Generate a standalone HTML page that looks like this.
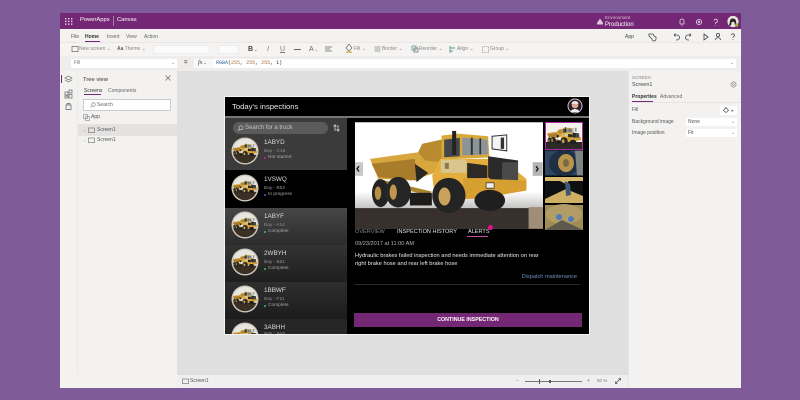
<!DOCTYPE html>
<html><head><meta charset="utf-8"><style>
html,body{margin:0;padding:0}
body{width:800px;height:400px;overflow:hidden;background:#7f5b9a;position:relative;font-family:"Liberation Sans",sans-serif;font-size:5px;color:#444}
div,span,svg.a{position:absolute}
#p{left:0;top:0;width:800px;height:400px;filter:blur(.3px)}
.t{white-space:nowrap;line-height:1}
.w{color:#fff}
.row{left:225px;width:122px;height:37px}
.n{left:264px;font-size:6.300px;color:#ddd;white-space:nowrap;line-height:1}
.b{left:264px;font-size:4.800px;color:#8f8f8f;white-space:nowrap;line-height:1}
.s{left:268px;font-size:4.800px;color:#a5a5a5;white-space:nowrap;line-height:1}
.d{left:264px;width:2px;height:2px;border-radius:50%}
</style></head><body><div id="p">
<svg width="0" height="0" style="position:absolute"><defs>
<g id="truck">
<path d="M75 130L220 110L232 85L290 72V150L262 175L200 195L100 190Z" fill="#d7a63c"/>
<path d="M220 110L232 85L290 72V140L240 135Z" fill="#b98a30"/>
<path d="M80 145L210 130L215 195L100 185Z" fill="#a97c2b"/>
<path d="M210 145L250 172L215 200Z" fill="#2a2620"/>
<path d="M290 60L340 54L430 62L434 126L290 132Z" fill="#d9a83a"/>
<path d="M298 72L345 67V122L298 125Z" fill="#44474a"/>
<path d="M352 66L428 72L430 116L352 120Z" fill="#8b9599"/>
<path d="M378 66h6v52h-6ZM404 68h5v48h-5Z" fill="#333"/>
<path d="M322 46h12v72h-12Z" fill="#222"/>
<path d="M442 62L486 58V106L442 100Z" fill="#f4f4f4" stroke="#333" stroke-width="3"/>
<path d="M468 66h10v34h-10Z" fill="#333"/>
<path d="M285 130H470L545 190V225L400 250L270 250L262 180Z" fill="#e3ae3d"/>
<path d="M288 132H365V172H288Z" fill="#d9c68f"/>
<path d="M300 142h12v18h-12Z" fill="#8a7a4a"/>
<path d="M367 142L428 150V188H367Z" fill="#2d2a26"/>
<path d="M430 122L520 135V215L470 220L430 185Z" fill="#2a2a2a"/>
<path d="M472 140H520V215H472Z" fill="#4a4a48"/>
<path d="M355 188L545 195V225L400 250H355Z" fill="#d69f30"/>
<rect x="424" y="202" width="24" height="16" fill="#eee" stroke="#222" stroke-width="2"/>
<path d="M100 190L260 228L250 240L90 200Z" fill="#a9842f"/>
<ellipse cx="435" cy="255" rx="46" ry="32" fill="#1f1f1f"/>
<rect x="195" y="232" width="66" height="38" fill="#1d1c1b"/>
<ellipse cx="107" cy="233" rx="26" ry="42" fill="#232323"/>
<ellipse cx="99" cy="233" rx="10" ry="20" fill="#b88e45"/>
<ellipse cx="160" cy="230" rx="38" ry="46" fill="#262626"/>
<ellipse cx="145" cy="230" rx="11" ry="23" fill="#c09650"/>
<ellipse cx="312" cy="240" rx="50" ry="53" fill="#242424"/>
<ellipse cx="299" cy="243" rx="18" ry="27" fill="#c9a25b"/>
</g>
<symbol id="av" viewBox="0 0 30 30"><circle cx="15" cy="15" r="14.500" fill="#cfc9bc"/><circle cx="15" cy="15" r="13" fill="#e8e6e0"/><clipPath id="cp"><circle cx="15" cy="15" r="13"/></clipPath><g clip-path="url(#cp)"><rect y="19" width="30" height="11" fill="#3c2f24"/><svg x="1" y="5" width="28" height="18" viewBox="60 40 500 260"><use href="#truck"/></svg></g></symbol>
</defs></svg>

<!-- window -->
<div style="left:60px;top:13px;width:681px;height:375px;background:#f3f2f1"></div>
<div style="left:60px;top:13px;width:681px;height:16px;background:#742774"></div>
<svg class="a" style="left:65px;top:18px" width="8" height="7"><g fill="#e8d8ea"><rect x="0" y="0" width="1.400" height="1.400"/><rect x="3" y="0" width="1.400" height="1.400"/><rect x="6" y="0" width="1.400" height="1.400"/><rect x="0" y="2.700" width="1.400" height="1.400"/><rect x="3" y="2.700" width="1.400" height="1.400"/><rect x="6" y="2.700" width="1.400" height="1.400"/><rect x="0" y="5.400" width="1.400" height="1.400"/><rect x="3" y="5.400" width="1.400" height="1.400"/><rect x="6" y="5.400" width="1.400" height="1.400"/></g></svg>
<div class="t w" style="left:80px;top:18px;font-size:5.800px">PowerApps</div>
<div style="left:113px;top:16px;width:1px;height:10px;background:#a878a8"></div>
<div class="t w" style="left:117px;top:18px;font-size:5.800px">Canvas</div>
<svg class="a" style="left:596px;top:18px" width="8" height="7"><path d="M1 6.500V5L4 .5L7 5V6.500Z" fill="#dcc9de"/></svg>
<div class="t" style="left:605px;top:16px;font-size:4.500px;color:#d5bcd7">Environment</div>
<div class="t w" style="left:605px;top:22px;font-size:6px">Production</div>
<svg class="a" style="left:677px;top:17px" width="62" height="12" fill="none" stroke="#e6d5e8" stroke-width=".8"><path d="M3 7V4a2 2 0 0 1 4 0V7H3M4.500 8.200h1"/><circle cx="22" cy="5" r="2.600"/><circle cx="22" cy="5" r=".8"/><path d="M37 3.500a1.700 1.700 0 1 1 2 2c-.6.300-.7.600-.7 1.200M38.300 8v.6"/></svg>
<svg class="a" style="left:727px;top:15px" width="12" height="13"><circle cx="6" cy="6.500" r="5.600" fill="#e8e4e0"/><path d="M3 6.500C2.500 2.500 9.500 2.500 9 7L10 10.500H8L7.500 7.500C6.500 6.500 5 6.500 4.500 7.500L4 10.500H2Z" fill="#2b2523"/><circle cx="9.700" cy="10" r="1.600" fill="#9cb33a"/></svg>

<!-- menu row -->
<div class="t" style="left:71px;top:35px;color:#555">File</div>
<div class="t" style="left:85px;top:35px;color:#333;font-weight:bold">Home</div>
<div style="left:85px;top:41px;width:15px;height:1px;background:#742774"></div>
<div class="t" style="left:107px;top:35px;color:#666">Insert</div>
<div class="t" style="left:126px;top:35px;color:#666">View</div>
<div class="t" style="left:144px;top:35px;color:#666">Action</div>
<div class="t" style="left:625px;top:35px;color:#444">App</div>
<svg class="a" style="left:648px;top:32px" width="92" height="10" fill="none" stroke="#444" stroke-width=".8"><path d="M1 2h4l1 2 2 1v2a2 2 0 0 1-4 0L1 4Z"/><path d="M26 3h3a2 2 0 0 1 0 5h-1M26 3l1.500-1.400M26 3l1.500 1.400"/><path d="M43 3h-3a2 2 0 0 0 0 5h1M43 3l-1.500-1.400M43 3l-1.500 1.400"/><path d="M56 2l4 3-4 3Z"/><circle cx="70" cy="3" r="1.600"/><path d="M67.500 8c0-3 5-3 5 0"/><path d="M83.500 3a1.500 1.500 0 1 1 2 1.700c-.5.300-.6.500-.6 1.100M84.900 7.400v.7"/></svg>

<!-- toolbar -->
<div style="left:60px;top:42px;width:681px;height:14px;background:#f5f4f3;border-top:1px solid #e9e8e7;box-sizing:border-box"></div>
<svg class="a" style="left:71px;top:45px" width="9" height="8" fill="none" stroke="#666" stroke-width=".7"><rect x="1" y="1.500" width="6" height="5"/></svg>
<div class="t" style="left:79px;top:47px;color:#888">New screen ⌄</div>
<div class="t" style="left:117px;top:47px;color:#888"><b style="color:#666">Aa</b> Theme ⌄</div>
<div style="left:153px;top:45px;width:57px;height:9px;background:#fbfbfb;border:1px solid #ececec;box-sizing:border-box"></div>
<div style="left:218px;top:45px;width:21px;height:9px;background:#fbfbfb;border:1px solid #ececec;box-sizing:border-box"></div>
<div class="t" style="left:248px;top:46px;font-size:7px;color:#444;font-weight:bold">B<span style="position:static;font-size:4px;font-weight:normal"> ⌄</span></div>
<div class="t" style="left:267px;top:46px;font-size:7px;color:#777;font-style:italic">I</div>
<div class="t" style="left:280px;top:46px;font-size:7px;color:#777;text-decoration:underline">U</div>
<div style="left:294px;top:49px;width:7px;height:1px;background:#666"></div>
<div class="t" style="left:309px;top:46px;font-size:7px;color:#666">A<span style="position:static;font-size:4px"> ⌄</span></div>
<svg class="a" style="left:325px;top:46px" width="8" height="7" stroke="#666" stroke-width=".8"><path d="M0 1h7M0 3h5M0 5h7"/></svg>
<svg class="a" style="left:345px;top:44px" width="8" height="9"><path d="M4 0L7 4L4 7L1 4Z" fill="none" stroke="#666" stroke-width=".7"/><rect x="1" y="7.500" width="6" height="1.200" fill="#c8a53a"/></svg>
<div class="t" style="left:354px;top:47px;color:#888">Fill ⌄</div>
<svg class="a" style="left:374px;top:46px" width="7" height="7" fill="none" stroke="#888" stroke-width=".7"><path d="M.5 1h6M.5 3h6M.5 5h6"/></svg>
<div class="t" style="left:382px;top:47px;color:#888">Border ⌄</div>
<svg class="a" style="left:411px;top:45px" width="8" height="8" fill="none" stroke="#5a9a8a" stroke-width=".8"><rect x="1" y="1" width="4" height="4"/><rect x="3" y="3" width="4" height="4" stroke="#777"/></svg>
<div class="t" style="left:419px;top:47px;color:#888">Reorder ⌄</div>
<svg class="a" style="left:449px;top:46px" width="7" height="7" stroke="#5a9a8a" stroke-width=".9"><path d="M1 0V7M1 2h5M1 5h3"/></svg>
<div class="t" style="left:457px;top:47px;color:#888">Align ⌄</div>
<svg class="a" style="left:482px;top:46px" width="7" height="7" fill="none" stroke="#777" stroke-width=".6" stroke-dasharray="1 .6"><rect x=".5" y=".5" width="6" height="6"/></svg>
<div class="t" style="left:490px;top:47px;color:#888">Group ⌄</div>

<!-- formula bar -->
<div style="left:60px;top:56px;width:681px;height:15px;background:#eeedec"></div>
<div style="left:71px;top:59px;width:106px;height:9px;background:#fff"></div>
<div class="t" style="left:74px;top:61px;color:#777">Fill</div>
<div class="t" style="left:171px;top:61px;color:#888">⌄</div>
<div class="t" style="left:184px;top:60px;color:#444;font-size:6px;font-weight:bold">=</div>
<div style="left:194px;top:59px;width:19px;height:9px;background:#f8f8f8"></div>
<div class="t" style="left:198px;top:60px;color:#333;font-size:6px;font-style:italic;font-family:'Liberation Serif',serif">fx<span style="position:static;font-size:4px;font-style:normal"> ⌄</span></div>
<div style="left:213px;top:59px;width:523px;height:9px;background:#fff"></div>
<div class="t" style="left:216px;top:61px;font-size:5px;font-family:'Liberation Mono',monospace;color:#333"><span style="position:static;color:#35659a">RGBA</span>(<span style="position:static;color:#a5703a">255</span>, <span style="position:static;color:#a5703a">255</span>, <span style="position:static;color:#a5703a">255</span>, 1)</div>
<div class="t" style="left:730px;top:61px;color:#888">⌄</div>

<!-- left rail + tree -->
<div style="left:60px;top:71px;width:17px;height:317px;background:#f3f2f1"></div>
<div style="left:61px;top:75px;width:1px;height:8px;background:#742774"></div>
<svg class="a" style="left:64px;top:75px" width="9" height="36" fill="none" stroke="#666" stroke-width=".7"><path d="M1 3l3.500-2L8 3l-3.500 2ZM1 5l3.500 2L8 5"/><rect x="1" y="17" width="3" height="3"/><rect x="5" y="15" width="3" height="3"/><rect x="1" y="21" width="3" height="2"/><rect x="5" y="19.500" width="3" height="3.500"/><path d="M2 30h5v4.500H2ZM3 30v-1.500h3V30"/></svg>
<div style="left:77px;top:71px;width:100px;height:304px;background:#f3f2f1;border-left:1px solid #ebeaea;box-sizing:border-box"></div>
<div style="left:177px;top:71px;width:451px;height:304px;background:#dfdfdf"></div>
<div class="t" style="left:83px;top:78px;color:#333;font-size:5.800px">Tree view</div>
<svg class="a" style="left:165px;top:75px" width="7" height="7" stroke="#666" stroke-width=".7"><path d="M.5.500l5 5M5.500.500l-5 5"/></svg>
<div class="t" style="left:84px;top:89px;color:#333">Screens</div>
<div style="left:84px;top:94px;width:17px;height:1px;background:#742774"></div>
<div class="t" style="left:108px;top:89px;color:#666">Components</div>
<div style="left:83px;top:99px;width:88px;height:12px;background:#fff;border:1px solid #ccc;box-sizing:border-box"></div>
<svg class="a" style="left:90px;top:102px" width="6" height="6" fill="none" stroke="#777" stroke-width=".6"><circle cx="3.500" cy="2.500" r="1.800"/><path d="M2.200 3.800L.6 5.400"/></svg>
<div class="t" style="left:97px;top:103px;color:#666">Search</div>
<svg class="a" style="left:83px;top:114px" width="7" height="7" fill="none" stroke="#888" stroke-width=".6"><rect x=".5" y=".5" width="4" height="4"/><rect x="2.500" y="2.500" width="4" height="4"/></svg>
<div class="t" style="left:91px;top:115px;color:#555">App</div>
<div style="left:78px;top:124px;width:99px;height:12px;background:#e3e2e1"></div>
<div class="t" style="left:84px;top:129px;color:#777;font-size:4px">›</div>
<svg class="a" style="left:88px;top:127px" width="7" height="7" fill="none" stroke="#666" stroke-width=".6"><rect x=".5" y="1" width="6" height="4.500"/></svg>
<div class="t" style="left:97px;top:128px;color:#555">Screen1</div>
<div class="t" style="left:84px;top:139px;color:#777;font-size:4px">›</div>
<svg class="a" style="left:88px;top:137px" width="7" height="7" fill="none" stroke="#666" stroke-width=".6"><rect x=".5" y="1" width="6" height="4.500"/></svg>
<div class="t" style="left:97px;top:138px;color:#555">Screen1</div>

<!-- right panel -->
<div style="left:628px;top:71px;width:113px;height:317px;background:#f3f2f1;border-left:1px solid #e8e7e6;box-sizing:border-box"></div>
<div class="t" style="left:632px;top:76px;color:#888;font-size:4.500px">SCREEN</div>
<div class="t" style="left:632px;top:83px;color:#444;font-size:5.500px">Screen1</div>
<svg class="a" style="left:730px;top:81px" width="7" height="7" fill="none" stroke="#888" stroke-width=".7"><circle cx="3.500" cy="3.500" r="2.600"/><circle cx="3.500" cy="3.500" r=".8"/></svg>
<div class="t" style="left:632px;top:95px;color:#333;font-size:5px;font-weight:bold">Properties</div>
<div style="left:632px;top:101px;width:21px;height:1px;background:#742774"></div>
<div class="t" style="left:660px;top:95px;color:#666">Advanced</div>
<div style="left:628px;top:102px;width:113px;height:1px;background:#e6e5e4"></div>
<div class="t" style="left:632px;top:108px;color:#555">Fill</div>
<div style="left:720px;top:106px;width:17px;height:9px;background:#fff"></div>
<svg class="a" style="left:723px;top:107px" width="12" height="7" fill="none" stroke="#555" stroke-width=".7"><path d="M3 .5L5.500 3.500L3 5.500L.5 3.500ZM8 3l1.200 1.200L10.400 3"/></svg>
<div class="t" style="left:632px;top:120px;color:#555">Background image</div>
<div style="left:686px;top:118px;width:51px;height:8px;background:#fff"></div>
<div class="t" style="left:688px;top:120px;color:#555">None</div>
<div class="t" style="left:731px;top:120px;color:#888">⌄</div>
<div class="t" style="left:632px;top:131px;color:#555">Image position</div>
<div style="left:686px;top:129px;width:51px;height:8px;background:#fff"></div>
<div class="t" style="left:688px;top:131px;color:#555">Fit</div>
<div class="t" style="left:731px;top:131px;color:#888">⌄</div>

<!-- status bar -->
<div style="left:177px;top:375px;width:451px;height:13px;background:#efefef"></div>
<svg class="a" style="left:182px;top:378px" width="7" height="7" fill="none" stroke="#666" stroke-width=".6"><rect x=".5" y="1" width="6" height="4.500"/></svg>
<div class="t" style="left:190px;top:379px;color:#555">Screen1</div>
<div style="left:525px;top:381px;width:57px;height:1px;background:#777"></div>
<div style="left:539px;top:379px;width:1px;height:5px;background:#555"></div>
<div style="left:549px;top:380px;width:2px;height:3px;background:#555"></div>
<div class="t" style="left:516px;top:379px;color:#777">−</div>
<div class="t" style="left:587px;top:379px;color:#777">+</div>
<div class="t" style="left:597px;top:379px;color:#777;font-size:4.500px">50 %</div>
<svg class="a" style="left:615px;top:378px" width="6" height="6" stroke="#555" stroke-width=".8"><path d="M.5 5.500l5-5M3.500.500h2v2M.5 3.500v2h2" fill="none"/></svg>

<!-- app -->
<div style="left:224px;top:96px;width:366px;height:239px;background:#f5f5f5"></div>
<div style="left:225px;top:97px;width:364px;height:237px;background:#000"></div>
<div class="t" style="left:232px;top:103px;color:#e6e6e6;font-size:7.700px">Today's inspections</div>
<svg class="a" style="left:567px;top:98px" width="16" height="16"><circle cx="8" cy="8" r="7" fill="#2a1a2a" stroke="#d9b7d6"/><circle cx="8" cy="7" r="3.400" fill="#d9a890"/><path d="M3.500 14c1-4 8-4 9 0Z" fill="#eee"/><path d="M4.500 6c0-4 7-4 7 0Z" fill="#e8e3d8"/></svg>
<div style="left:225px;top:116px;width:364px;height:2px;background:#777"></div>
<div style="left:225px;top:118px;width:122px;height:52px;background:#3b3b3b"></div>
<div style="left:233px;top:122px;width:95px;height:12px;border-radius:6px;background:#5b5b5b"></div>
<svg class="a" style="left:237px;top:125px" width="7" height="7" fill="none" stroke="#ccc" stroke-width=".7"><circle cx="4" cy="2.800" r="2"/><path d="M2.600 4.300L.8 6.100"/></svg>
<div class="t" style="left:245px;top:125px;color:#c5c5c5;font-size:6px">Search for a truck</div>
<svg class="a" style="left:333px;top:124px" width="7" height="8" stroke="#ddd" stroke-width=".8" fill="none"><path d="M2 7V1L.5 2.500M2 1l1.500 1.500M5 1v6L3.500 5.500M5 7l1.500-1.500"/></svg>

<div class="row" style="top:170px;background:#000"></div>
<div class="row" style="top:208px;background:linear-gradient(#464646,#2c2c2c)"></div>
<div class="row" style="top:245px;background:linear-gradient(#333,#1e1e1e)"></div>
<div class="row" style="top:282px;background:linear-gradient(#2e2e2e,#1c1c1c)"></div>
<div class="row" style="top:319px;height:15px;background:#262626"></div>

<svg class="a" style="left:231px;top:137px" width="28" height="28"><use href="#av" width="28" height="28"/></svg>
<svg class="a" style="left:231px;top:174px" width="28" height="28"><use href="#av" width="28" height="28"/></svg>
<svg class="a" style="left:231px;top:211px" width="28" height="28"><use href="#av" width="28" height="28"/></svg>
<svg class="a" style="left:231px;top:248px" width="28" height="28"><use href="#av" width="28" height="28"/></svg>
<svg class="a" style="left:231px;top:285px" width="28" height="28"><use href="#av" width="28" height="28"/></svg>
<div style="left:225px;top:322px;width:122px;height:12px;overflow:hidden"><svg class="a" style="left:6px;top:0" width="28" height="28"><use href="#av" width="28" height="28"/></svg></div>

<div class="n" style="top:140px">1ABYD</div><div class="b" style="top:149.500px">Bay - C15</div><div class="d" style="top:157px;background:#e0208c"></div><div class="s" style="top:155.500px">Not started</div>
<div class="n" style="top:177px">1VSWQ</div><div class="b" style="top:186.500px">Bay - B52</div><div class="d" style="top:194px;background:#4c5fd0"></div><div class="s" style="top:192.500px">In progress</div>
<div class="n" style="top:214px">1ABYF</div><div class="b" style="top:223.500px">Bay - A14</div><div class="d" style="top:231px;background:#3fbf6f"></div><div class="s" style="top:229.500px">Complete</div>
<div class="n" style="top:251px">2WBYH</div><div class="b" style="top:260.500px">Bay - B51</div><div class="d" style="top:268px;background:#3fbf6f"></div><div class="s" style="top:266.500px">Complete</div>
<div class="n" style="top:288px">1BBWF</div><div class="b" style="top:297.500px">Bay - F11</div><div class="d" style="top:305px;background:#3fbf6f"></div><div class="s" style="top:303.500px">Complete</div>
<div class="n" style="top:324.500px">3ABHH</div><div class="b" style="top:332px;height:2px;overflow:hidden">Bay - B09</div>

<!-- main image -->
<svg class="a" style="left:355px;top:122px" width="188" height="107" viewBox="30 20 565 320">
<defs><linearGradient id="fade" x1="0" y1="0" x2="0" y2="1"><stop offset="0" stop-color="#fff"/><stop offset=".65" stop-color="#fff"/><stop offset="1" stop-color="#7c7a78"/></linearGradient></defs>
<rect x="30" y="20" width="565" height="320" fill="url(#fade)"/>
<rect x="30" y="278" width="522" height="62" fill="#37302d"/>
<rect x="552" y="275" width="43" height="65" fill="#a08d78"/>
<use href="#truck"/>
<rect x="30" y="140" width="24" height="41" fill="#c9c9c9"/>
<path d="M42 152l-6 8 6 8" fill="none" stroke="#111" stroke-width="4"/>
<rect x="564" y="140" width="30" height="41" fill="#b5b5b5"/>
<path d="M574 152l6 8-6 8" fill="none" stroke="#111" stroke-width="4"/>
</svg>

<!-- thumbnails -->
<svg class="a" style="left:544px;top:122px" width="39" height="108" viewBox="0 0 39 108">
<rect x="1" y="0" width="38" height="28" fill="#a72fa0"/>
<rect x="2" y="1" width="36" height="26" fill="#f4f0ec"/>
<rect x="2" y="20" width="36" height="7" fill="#2e2826"/>
<svg x="2" y="3" width="36" height="22" viewBox="60 40 500 260"><use href="#truck"/></svg>
<rect x="1" y="28.500" width="38" height="25" fill="#2f4660"/>
<ellipse cx="20" cy="41" rx="15" ry="13" fill="#1f2f44"/>
<ellipse cx="22" cy="41" rx="8" ry="9" fill="#b8954a"/>
<ellipse cx="22" cy="41" rx="3" ry="4" fill="#7a6a40"/>
<path d="M31 28.500h8v25h-6Z" fill="#7f8484"/>
<rect x="1" y="55" width="38" height="26" fill="#0f1011"/>
<path d="M1 55h38v4H25l-3 3-6-3H1Z" fill="#d7ba6e"/>
<path d="M1 77L22 67L39 74V81H1Z" fill="#cdb063"/>
<path d="M21 59l5 3 1 11-5 1Z" fill="#3c5a74"/>
<rect x="1" y="83" width="38" height="25" fill="#a08c55"/>
<ellipse cx="20" cy="92" rx="18" ry="10" fill="#b39d66"/>
<path d="M1 108L18 98L39 108Z" fill="#5f584c"/>
<circle cx="15" cy="95" r="3" fill="#4d7cb8"/>
<circle cx="27" cy="97" r="3" fill="#4d7cb8"/>
</svg>

<!-- tabs -->
<div class="t" style="left:355px;top:229.500px;color:#8a8a8a;font-size:5.550px">OVERVIEW</div>
<div class="t" style="left:397px;top:229.500px;color:#e6e6e6;font-size:5.550px">INSPECTION HISTORY</div>
<div class="t" style="left:468px;top:229.500px;color:#e6e6e6;font-size:5.550px">ALERTS</div>
<div style="left:467px;top:236px;width:21px;height:1px;background:#c94fa8"></div>
<div style="left:488px;top:225px;width:5px;height:5px;border-radius:50%;background:#e6108f"></div>
<div class="t" style="left:355px;top:242px;color:#b5b5b5;font-size:5.600px">09/23/2017 at 11:00 AM</div>
<div class="t" style="left:355px;top:254px;color:#e8e8e8;font-size:5.700px">Hydraulic brakes failed inspection and needs immediate attention on rear</div>
<div class="t" style="left:355px;top:262px;color:#e8e8e8;font-size:5.700px">right brake hose and rear left brake hose</div>
<div class="t" style="right:223px;top:275px;color:#6f93bd;font-size:5.600px">Dispatch maintenance</div>
<div style="left:354px;top:284px;width:226px;height:1px;background:#2a2a2a"></div>
<div style="left:354px;top:313px;width:228px;height:14px;background:#742774"></div>
<div class="t w" style="left:354px;width:228px;top:317.500px;text-align:center;font-size:5.300px;font-weight:bold">CONTINUE INSPECTION</div>
</div></body></html>
